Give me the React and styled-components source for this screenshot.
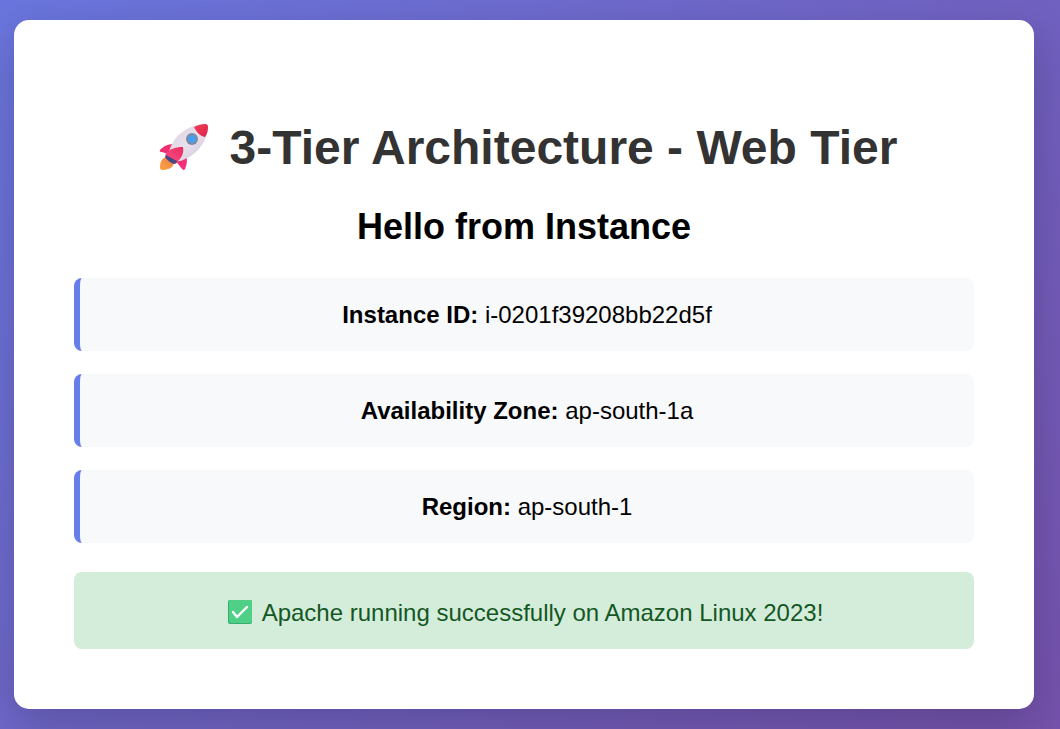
import React from "react";
import styled, { createGlobalStyle } from "styled-components";

const GlobalStyle = createGlobalStyle`
  * { box-sizing: border-box; }
  body {
    margin: 0;
    font-family: "Liberation Sans", Arial, sans-serif;
    font-size: 24px;
    line-height: 27px;
    color: #000;
  }
`;

const Page = styled.div`
  min-height: 100vh;
  padding: 20px 26px 20px 14px;
  background: linear-gradient(135deg, #6a76de 0%, #7552ac 100%);
`;

const Card = styled.main`
  max-width: 1200px;
  margin: 0 auto;
  padding: 60px;
  background: #fff;
  border-radius: 15px;
  box-shadow: 0 15px 45px rgba(0, 0, 0, 0.2);
  text-align: center;
`;

const Title = styled.h1`
  display: flex;
  align-items: center;
  justify-content: center;
  gap: 13px;
  margin: 41px 0 31px;
  font-size: 48px;
  line-height: 54px;
  color: #333;
`;

const Rocket = styled.svg`
  flex: none;
  width: 66px;
  height: 54px;
`;

const Subtitle = styled.h2`
  margin: 0 0 30px;
  font-size: 36px;
  line-height: 42px;
`;

const InfoList = styled.div`
  display: flex;
  flex-direction: column;
  gap: 23px;
`;

const InfoBox = styled.div`
  padding: 23px;
  background: #f8f9fb;
  border-left: 6px solid #667eea;
  border-radius: 8px;
`;

const Status = styled.div`
  display: flex;
  align-items: center;
  justify-content: center;
  gap: 7px;
  margin-top: 29px;
  padding: 27px 23px 23px;
  background: #d4edda;
  border-radius: 8px;
  color: #155724;
`;

const Check = styled.svg`
  flex: none;
  width: 30px;
  height: 27px;
`;

function RocketIcon() {
  return (
    <Rocket viewBox="0 0 66 54" aria-hidden="true">
      <defs>
        <linearGradient id="hull" x1="0" y1="0" x2="1" y2="1">
          <stop offset="0" stopColor="#d9d0dc" />
          <stop offset="0.5" stopColor="#e8e1ec" />
          <stop offset="1" stopColor="#cfc3da" />
        </linearGradient>
        <linearGradient id="fin" x1="0" y1="0" x2="1" y2="1">
          <stop offset="0" stopColor="#e52f5c" />
          <stop offset="1" stopColor="#fa2e87" />
        </linearGradient>
        <linearGradient id="frontFin" x1="1" y1="0" x2="0" y2="1">
          <stop offset="0" stopColor="#e8305e" />
          <stop offset="1" stopColor="#ff4d8c" />
        </linearGradient>
        <linearGradient id="nose" x1="0" y1="0" x2="1" y2="1">
          <stop offset="0" stopColor="#f04358" />
          <stop offset="1" stopColor="#dc1f49" />
        </linearGradient>
        <linearGradient id="flame" x1="1" y1="0" x2="0" y2="1">
          <stop offset="0" stopColor="#e8823f" />
          <stop offset="1" stopColor="#ffa045" />
        </linearGradient>
      </defs>
      <path d="M15 36C10 38 9 42 9 47Q9 49 11 49C17 49 22 47 23 42Z" fill="url(#flame)" />
      <path d="M23 23C17 23 13 25 9 29Q8 31 11 31L20 34Z" fill="url(#fin)" />
      <path d="M34 31C37 38 36 43 34 48Q33 50 31 48L24 39Z" fill="url(#fin)" />
      <path d="M18 31C22 15 36 4 54 3Q57 3 57 6C56 23 43 36 29 40Q23 41 18 35Z" fill="url(#hull)" />
      <path d="M43 6C47 4 51 3 54 3Q57 3 57 6C57 10 56 13 54 16C49 15 45 11 43 6Z" fill="url(#nose)" />
      <circle cx="41" cy="18" r="6" fill="#85879d" />
      <circle cx="41" cy="18" r="4" fill="#459fec" />
      <path d="M14 34C18 28 24 26 32 26C33 32 31 37 25 42Z" fill="url(#frontFin)" />
      <path d="M15 34L26 40Q26 43 23 43Q17 41 14 36Z" fill="#4b4682" />
    </Rocket>
  );
}

function CheckIcon() {
  return (
    <Check viewBox="0 0 30 27" aria-hidden="true">
      <rect x="3" y="1" width="24" height="24" rx="2" fill="#35ac70" />
      <rect x="4" y="1" width="23" height="23" rx="2" fill="#50d087" />
      <path d="M8 13L12 18L22 8" fill="none" stroke="#fff" strokeWidth="2.4" strokeLinecap="round" strokeLinejoin="round" />
    </Check>
  );
}

const details = [
  ["Instance ID", "i-0201f39208bb22d5f"],
  ["Availability Zone", "ap-south-1a"],
  ["Region", "ap-south-1"],
];

export default function App() {
  return (
    <>
      <GlobalStyle />
      <Page>
        <Card>
          <Title>
            <RocketIcon />
            3-Tier Architecture - Web Tier
          </Title>
          <Subtitle>Hello from Instance</Subtitle>
          <InfoList>
            {details.map(([label, value]) => (
              <InfoBox key={label}>
                <strong>{label}:</strong> {value}
              </InfoBox>
            ))}
          </InfoList>
          <Status role="status">
            <CheckIcon />
            Apache running successfully on Amazon Linux 2023!
          </Status>
        </Card>
      </Page>
    </>
  );
}
